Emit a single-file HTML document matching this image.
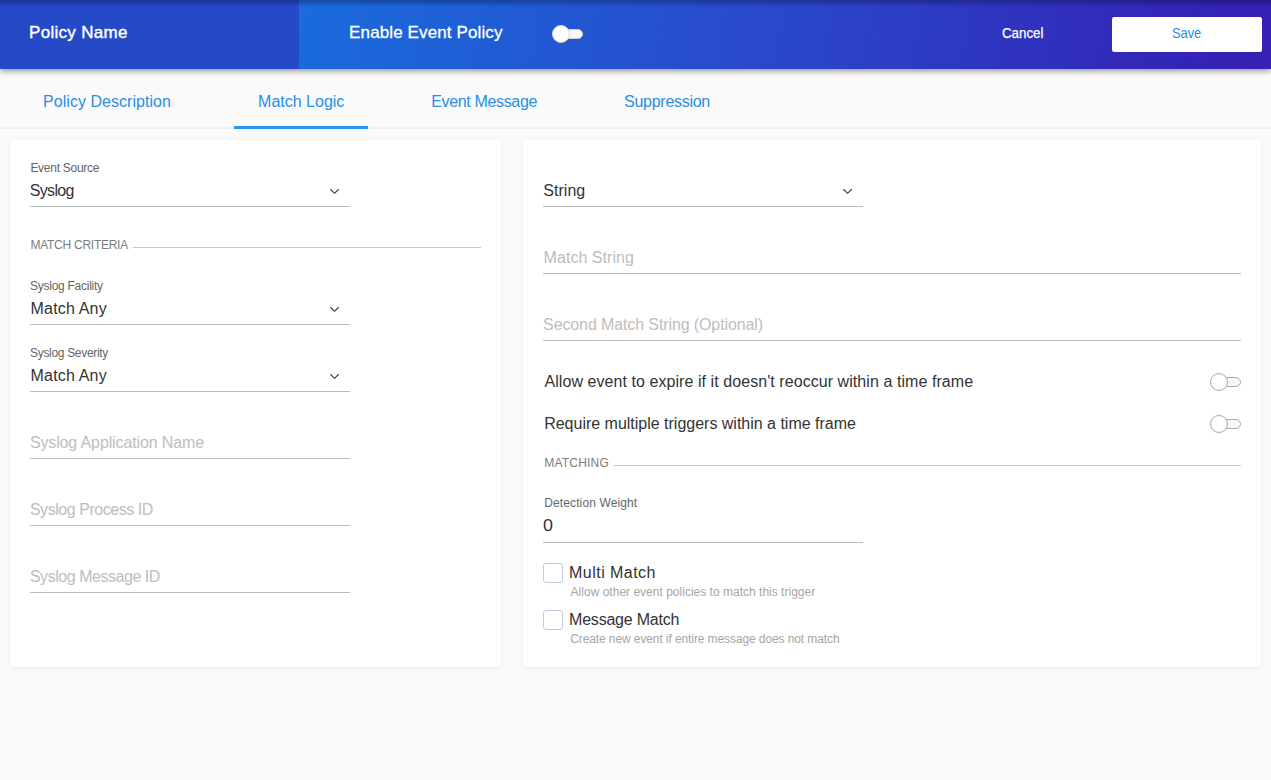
<!DOCTYPE html>
<html lang="en">
<head>
<meta charset="utf-8">
<title>Event Policy Editor</title>
<style>
html,body{margin:0;padding:0;}
body{width:1271px;height:780px;overflow:hidden;background:#fafafa;position:relative;
  font-family:"Liberation Sans",sans-serif;color:#333;}
.abs{position:absolute;}
.t{position:absolute;white-space:nowrap;line-height:1;}
/* header */
#hdr{left:0;top:0;width:1271px;height:69px;background:linear-gradient(100deg,#1a6bdc 299px,#2a47c9 780px,#3324b8 1180px,#3720b5 1271px);
  box-shadow:0 2px 6px rgba(0,0,0,.42);z-index:5;}
#hdr-left{left:0;top:0;width:299px;height:69px;background:#254ac8;}
#hdr-top{left:0;top:0;width:1271px;height:7px;background:linear-gradient(to bottom,rgba(0,0,40,.30),rgba(0,0,40,0));}
.hw{color:#fff;font-size:17px;-webkit-text-stroke:0.3px #fff;}
#save{left:1112px;top:17px;width:150px;height:35px;background:#fff;border-radius:2px;}
/* tabs */
#tabs{left:0;top:69px;width:1271px;height:60px;background:linear-gradient(to bottom,#fafafa 56.5px,#f6f6f6 57.5px,#f0f0f0 58.5px,#ececec 60px);}
.tab{color:#2a8ee3;font-size:16px;}
#ink{left:234px;top:126px;width:134px;height:3px;background:#2196f3;}
/* cards */
.card{background:#fff;border-radius:4px;box-shadow:0 1px 5px rgba(0,0,0,.05),0 0 2px rgba(0,0,0,.03);}
.lbl{font-size:12px;color:#656565;}
.val{font-size:16px;color:#333;}
.ph{font-size:16px;color:#bdbdbd;}
.sec{font-size:12px;color:#7c7c7c;}
.hint{font-size:12px;color:#a6a6a6;}
.ul{position:absolute;height:1px;background:#bababa;}
.sl{position:absolute;height:1px;background:#cbcbcb;}
.chev{position:absolute;width:10px;height:7px;}
.cb{position:absolute;width:18px;height:18px;border:1px solid #c6c9dc;border-radius:3px;background:#fff;}
.tg{position:absolute;width:31px;height:18px;}
.tg i{position:absolute;left:8px;top:4px;width:21px;height:8px;border:1px solid #a9a9a9;border-radius:6px;background:#f5f6fa;}
.tg b{position:absolute;left:0;top:0;width:16px;height:16px;border:1px solid #a9a9a9;border-radius:50%;background:#fff;}
</style>
</head>
<body>
<!-- header -->
<div id="hdr" class="abs">
  <div id="hdr-left" class="abs"></div>
  <div id="hdr-top" class="abs"></div>
  <span class="t hw" id="t-pn" style="-webkit-text-stroke:0.4px #fff;left:29.1px;top:24px;letter-spacing:0.285px;">Policy Name</span>
  <span class="t hw" id="t-ee" style="left:349.1px;top:24px;letter-spacing:0.12px;">Enable Event Policy</span>
  <div class="tg" style="left:552px;top:25px;"><i style="border-color:#d8cdb8;background:#f7f7fb;"></i><b style="border-color:#e0d6c4;"></b></div>
  <span class="t" id="t-cancel" style="left:1001.9px;top:25px;font-size:15px;color:#fff;-webkit-text-stroke:0.25px #fff;transform-origin:0 50%;transform:scaleX(0.8882);">Cancel</span>
  <div id="save" class="abs"></div>
  <span class="t" id="t-save" style="left:1172.3px;top:25px;font-size:15px;color:#2a8ee3;transform-origin:0 50%;transform:scaleX(0.8545);">Save</span>
</div>
<!-- tabs -->
<div id="tabs" class="abs"></div>
<span class="t tab" id="t-tab1" style="left:43.1px;top:94px;letter-spacing:0.039px;">Policy Description</span>
<span class="t tab" id="t-tab2" style="left:258.1px;top:94px;letter-spacing:0px;">Match Logic</span>
<span class="t tab" id="t-tab3" style="left:431.3px;top:94px;letter-spacing:-0.354px;">Event Message</span>
<span class="t tab" id="t-tab4" style="left:624.1px;top:94px;letter-spacing:-0.281px;">Suppression</span>
<div id="ink" class="abs"></div>

<!-- left card -->
<div class="card abs" style="left:10px;top:140px;width:491px;height:527px;"></div>
<span class="t lbl" id="t-es" style="left:30.4px;top:162px;letter-spacing:-0.274px;">Event Source</span>
<span class="t val" id="t-syslog" style="left:29.8px;top:183px;letter-spacing:-0.677px;">Syslog</span>
<svg class="chev" style="left:330px;top:188px;" viewBox="0 0 10 7"><path d="M0.4 1.25 L4.55 5.3 L8.7 1.25" fill="none" stroke="#333" stroke-width="1.1"/></svg>
<div class="ul" style="left:30px;top:206px;width:320px;"></div>

<span class="t sec" id="t-mc" style="left:30.4px;top:239px;letter-spacing:-0.254px;">MATCH CRITERIA</span>
<div class="sl" style="left:133px;top:247px;width:348px;"></div>

<span class="t lbl" id="t-sf" style="left:30px;top:280px;letter-spacing:-0.26px;">Syslog Facility</span>
<span class="t val" id="t-ma1" style="left:30.6px;top:301px;letter-spacing:0.174px;">Match Any</span>
<svg class="chev" style="left:330px;top:306px;" viewBox="0 0 10 7"><path d="M0.4 1.25 L4.55 5.3 L8.7 1.25" fill="none" stroke="#333" stroke-width="1.1"/></svg>
<div class="ul" style="left:30px;top:324px;width:320px;"></div>

<span class="t lbl" id="t-ss" style="left:30px;top:347px;letter-spacing:-0.311px;">Syslog Severity</span>
<span class="t val" id="t-ma2" style="left:30.6px;top:368px;letter-spacing:0.174px;">Match Any</span>
<svg class="chev" style="left:330px;top:373px;" viewBox="0 0 10 7"><path d="M0.4 1.25 L4.55 5.3 L8.7 1.25" fill="none" stroke="#333" stroke-width="1.1"/></svg>
<div class="ul" style="left:30px;top:391px;width:320px;"></div>

<span class="t ph" id="t-san" style="left:29.9px;top:435px;letter-spacing:-0.129px;">Syslog Application Name</span>
<div class="ul" style="left:30px;top:458px;width:320px;"></div>
<span class="t ph" id="t-spi" style="left:29.9px;top:502px;letter-spacing:-0.451px;">Syslog Process ID</span>
<div class="ul" style="left:30px;top:525px;width:320px;"></div>
<span class="t ph" id="t-smi" style="left:29.9px;top:569px;letter-spacing:-0.459px;">Syslog Message ID</span>
<div class="ul" style="left:30px;top:592px;width:320px;"></div>

<!-- right card -->
<div class="card abs" style="left:523px;top:140px;width:738px;height:527px;"></div>
<span class="t val" id="t-string" style="left:543.3px;top:183px;letter-spacing:0.03px;">String</span>
<svg class="chev" style="left:843px;top:188px;" viewBox="0 0 10 7"><path d="M0.4 1.25 L4.55 5.3 L8.7 1.25" fill="none" stroke="#333" stroke-width="1.1"/></svg>
<div class="ul" style="left:543px;top:206px;width:320px;"></div>

<span class="t ph" id="t-ms" style="left:543.6px;top:250px;letter-spacing:0.039px;">Match String</span>
<div class="ul" style="left:543px;top:273px;width:698px;"></div>
<span class="t ph" id="t-sms" style="left:543.1px;top:317px;letter-spacing:-0.112px;">Second Match String (Optional)</span>
<div class="ul" style="left:543px;top:340px;width:698px;"></div>

<span class="t val" id="t-allow" style="left:544.5px;top:374px;letter-spacing:0.064px;">Allow event to expire if it doesn't reoccur within a time frame</span>
<div class="tg" style="left:1210px;top:373px;"><i></i><b></b></div>
<span class="t val" id="t-req" style="left:544.2px;top:416px;letter-spacing:-0.009px;">Require multiple triggers within a time frame</span>
<div class="tg" style="left:1210px;top:415px;"><i></i><b></b></div>

<span class="t sec" id="t-matching" style="left:544.2px;top:457px;letter-spacing:0.209px;">MATCHING</span>
<div class="sl" style="left:613px;top:465px;width:628px;"></div>

<span class="t lbl" id="t-dw" style="left:544.2px;top:497px;letter-spacing:0.124px;">Detection Weight</span>
<span class="t val" id="t-zero" style="left:542.9px;top:518px;transform-origin:0 50%;transform:scaleX(1.1201);">0</span>
<div class="ul" style="left:543px;top:542px;width:320px;"></div>

<div class="cb" style="left:543px;top:563px;"></div>
<span class="t val" id="t-mm" style="left:569.1px;top:565px;letter-spacing:0.452px;">Multi Match</span>
<span class="t hint" id="t-mmh" style="left:570.6px;top:586px;letter-spacing:0.01px;">Allow other event policies to match this trigger</span>
<div class="cb" style="left:543px;top:610px;"></div>
<span class="t val" id="t-msg" style="left:569.1px;top:612px;letter-spacing:-0.225px;">Message Match</span>
<span class="t hint" id="t-msgh" style="left:570.2px;top:633px;letter-spacing:-0.098px;">Create new event if entire message does not match</span>
</body>
</html>
